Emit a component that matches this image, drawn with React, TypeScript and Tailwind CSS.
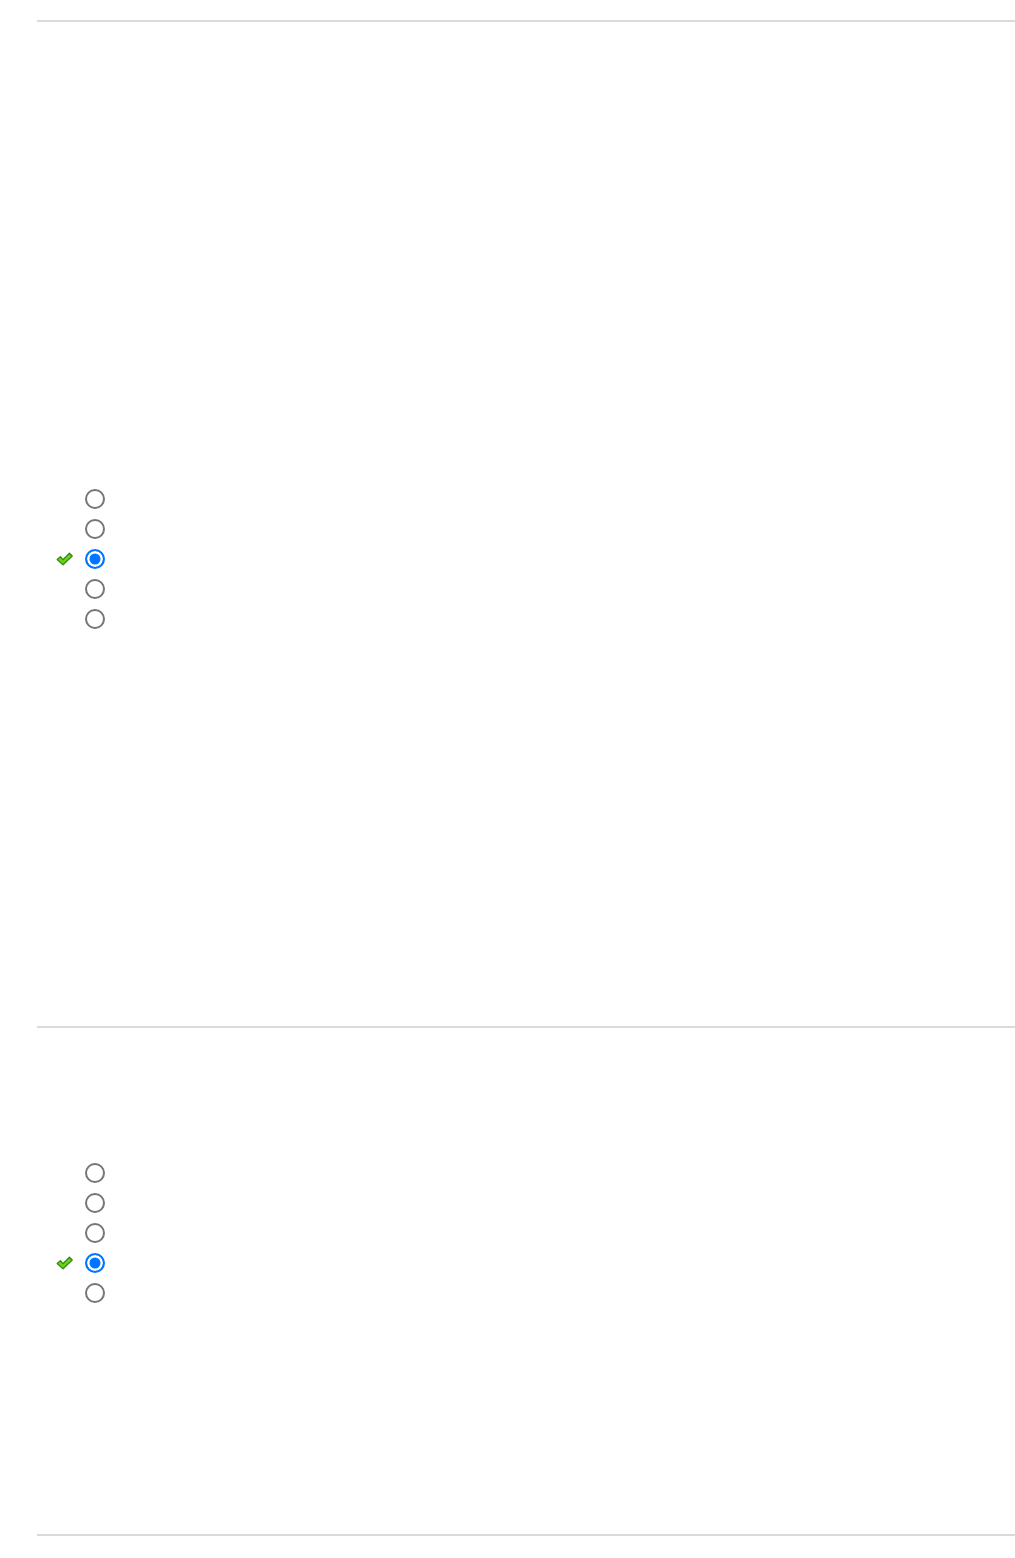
const CheckMark = () => (
  <svg width="17" height="14" viewBox="0 0 17 14" className="block">
    <path
      d="M1.2 7.6 L4.4 4.8 L7 7.8 L13.4 1.2 L16.2 4 L7 12.8 Z"
      fill="#66d81e"
      stroke="#3a8a0e"
      strokeWidth="1.3"
      strokeLinejoin="round"
    />
  </svg>
)

type Props = { name: string; count: number; correct: number }

function RadioGroup({ name, count, correct }: Props) {
  return (
    <div className="flex flex-col">
      {Array.from({ length: count }).map((_, i) => (
        <label key={i} className="flex items-center h-[30px]">
          <span className="w-[48px] flex items-center pl-[19px]">
            {i === correct && <CheckMark />}
          </span>
          <input
            type="radio"
            name={name}
            defaultChecked={i === correct}
            className="appearance-none m-0 w-5 h-5 rounded-full border-2 border-[#767676] bg-white checked:border-[#0075ff] checked:bg-[#0075ff] checked:shadow-[inset_0_0_0_2.5px_white]"
          />
        </label>
      ))}
    </div>
  )
}

export default function App() {
  return (
    <div className="min-h-screen w-full bg-white pl-[37px] font-['Liberation_Sans',sans-serif]">
      <div className="h-[20px]" />
      <hr className="border-0 border-t-2 border-[#dadada] m-0" />
      <div className="h-[462px]" />
      <RadioGroup name="q1" count={5} correct={2} />
      <div className="h-[392px]" />
      <hr className="border-0 border-t-2 border-[#dadada] m-0" />
      <div className="h-[130px]" />
      <RadioGroup name="q2" count={5} correct={3} />
      <div className="h-[226px]" />
      <hr className="border-0 border-t-2 border-[#dadada] m-0" />
    </div>
  )
}
